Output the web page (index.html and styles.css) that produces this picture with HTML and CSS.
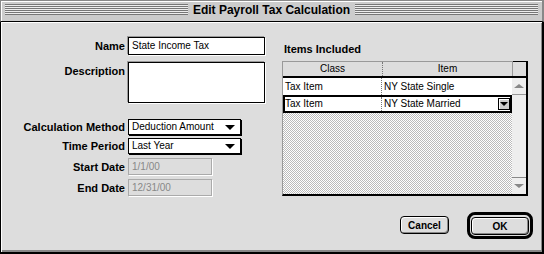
FILE: index.html
```html
<!DOCTYPE html>
<html lang="en">
  <head>
    <meta charset="UTF-8" />
    <title>Edit Payroll Tax Calculation</title>
    <link rel="stylesheet" href="styles.css">
  </head>
  <body>
    <div class="window">
      <div class="titlebar">
        <span class="stripes"></span>
        <span class="title">Edit Payroll Tax Calculation</span>
        <span class="stripes"></span>
      </div>

      <div class="content">
        <div class="panes">
          <div class="form">
            <div class="frow">
              <span class="lbl">Name</span>
              <div class="field">State Income Tax</div>
            </div>
            <div class="frow desc">
              <span class="lbl">Description</span>
              <div class="field area"></div>
            </div>
            <div class="frow calc">
              <span class="lbl">Calculation Method</span>
              <div class="popup">Deduction Amount</div>
            </div>
            <div class="frow period">
              <span class="lbl">Time Period</span>
              <div class="popup">Last Year</div>
            </div>
            <div class="frow start">
              <span class="lbl">Start Date</span>
              <div class="field date">1/1/00</div>
            </div>
            <div class="frow end">
              <span class="lbl">End Date</span>
              <div class="field date">12/31/00</div>
            </div>
          </div>

          <div class="items">
            <div class="items-title">Items Included</div>
            <div class="table">
              <div class="thead">
                <div class="th col-class">Class</div>
                <div class="th col-item">Item</div>
                <div class="corner"></div>
              </div>
              <div class="tbody">
                <div class="rows">
                  <div class="row">
                    <div class="td col-class">Tax Item</div>
                    <div class="td col-item">NY State Single</div>
                  </div>
                  <div class="row sel">
                    <div class="td col-class">Tax Item</div>
                    <div class="td col-item">NY State Married</div>
                    <span class="cell-btn"></span>
                  </div>
                  <div class="empty"></div>
                </div>
                <div class="scrollbar">
                  <div class="sb-btn up"><span class="tri-up"></span></div>
                  <div class="track"></div>
                  <div class="sb-btn down"><span class="tri-down"></span></div>
                </div>
              </div>
            </div>
          </div>
        </div>

        <div class="buttons">
          <button class="btn">Cancel</button>
          <div class="default-ring">
            <button class="btn ok">OK</button>
          </div>
        </div>
      </div>
    </div>
  </body>
</html>
```

FILE: styles.css
```css
body {
    margin: 0;
    background: #ddd;
    font-family: "Liberation Sans", Arial, sans-serif;
    color: #000;
}

.window {
    width: 544px;
    height: 254px;
    display: flex;
    flex-direction: column;
    background: #ddd;
}

/* title bar */
.titlebar {
    height: 22px;
    box-sizing: border-box;
    display: flex;
    align-items: flex-start;
    padding: 3px 4px 0 4px;
    background: #ccc;
    border-top: 1px solid #888;
    border-left: 1px solid #888;
    border-right: 2px solid #888;
    border-bottom: 1px solid #000;
    box-shadow: inset 1px 1px 0 #fff;
}

.stripes {
    flex: 1;
    height: 11px;
    background: repeating-linear-gradient(#777 0 1px, #eee 1px 2px);
}

.title {
    font-weight: bold;
    font-size: 12px;
    line-height: 12px;
    padding: 0 5px;
}

/* dialog body */
.content {
    flex: 1;
    display: flex;
    flex-direction: column;
    border-left: 1px solid #000;
    border-right: 2px solid #000;
    border-bottom: 2px solid #000;
    box-shadow: inset 1px 1px 0 #fff, inset -1px -2px 0 #888;
}

.panes {
    display: flex;
}

.form {
    width: 269px;
    padding-top: 15px;
}

.frow {
    display: flex;
    align-items: flex-start;
}

.lbl {
    width: 127px;
    box-sizing: border-box;
    padding: 3px 3px 0 0;
    text-align: right;
    font-weight: bold;
    font-size: 11px;
    line-height: 12px;
}

.field {
    width: 137px;
    height: 18px;
    box-sizing: border-box;
    border: 1px solid #000;
    background: #fff;
    font-size: 10px;
    line-height: 16px;
    padding: 0 3px;
    box-shadow: -1px -1px 0 #999, 1px 1px 0 #fff;
}

.frow.desc {
    margin-top: 7px;
}

.field.area {
    height: 41px;
}

.popup {
    position: relative;
    width: 113px;
    height: 16px;
    box-sizing: border-box;
    border: 1px solid #000;
    box-shadow: 1px 1px 0 #000;
    background: #fff;
    font-size: 10px;
    line-height: 14px;
    padding-left: 3px;
}

.popup::after {
    content: "";
    position: absolute;
    right: 5px;
    top: 5px;
    border-left: 5px solid transparent;
    border-right: 5px solid transparent;
    border-top: 5px solid #000;
}

.frow.calc {
    margin-top: 16px;
}

.frow.period {
    margin-top: 3px;
}

.frow.calc .lbl,
.frow.period .lbl {
    padding-top: 2px;
}

.field.date {
    width: 84px;
    height: 17px;
    line-height: 15px;
    background: #ddd;
    border-color: #aaa;
    color: #888;
    box-shadow: 1px 1px 0 #fff;
}

.frow.start {
    margin-top: 4px;
}

.frow.end {
    margin-top: 4px;
}

/* items table */
.items {
    margin-left: 12px;
}

.items-title {
    padding: 21px 0 0 2px;
    font-weight: bold;
    font-size: 11px;
    line-height: 12px;
    height: 18px;
}

.table {
    width: 246px;
    box-sizing: border-box;
    border-left: 1px solid #999;
    border-right: 2px solid #000;
    border-bottom: 2px solid #000;
}

.thead {
    display: flex;
    height: 17px;
    box-sizing: border-box;
    border-top: 1px solid #999;
    border-bottom: 2px solid #000;
    background: #ddd;
}

.th {
    font-size: 10px;
    line-height: 14px;
    text-align: center;
}

.col-class {
    width: 99px;
    border-right: 1px dotted #777;
}

.col-item {
    width: 129px;
}

.thead .col-item {
    border-right: 1px solid #999;
}

.corner {
    flex: 1;
    margin-top: -1px;
    border-top: 1px solid #000;
    background: #ddd;
}

.tbody {
    display: flex;
    height: 116px;
}

.rows {
    width: 229px;
    display: flex;
    flex-direction: column;
}

.row {
    position: relative;
    display: flex;
    height: 17px;
    box-sizing: border-box;
    background: #fff;
}

.td {
    font-size: 10px;
    line-height: 17px;
    padding-left: 2px;
    box-sizing: border-box;
}

.row .col-item {
    width: auto;
    flex: 1;
}

.row.sel {
    height: 18px;
    border: 2px solid #000;
}

.row.sel .td {
    line-height: 14px;
}

.row.sel .col-class {
    width: 97px;
    padding-left: 0;
}

.cell-btn {
    position: absolute;
    right: 0;
    top: 1px;
    width: 12px;
    height: 12px;
    box-sizing: border-box;
    border: 1px solid #000;
    background: #ccc;
    box-shadow: inset 1px 1px 0 #fff;
}

.cell-btn::after {
    content: "";
    position: absolute;
    left: 1px;
    top: 3px;
    border-left: 4px solid transparent;
    border-right: 4px solid transparent;
    border-top: 4px solid #000;
}

.empty {
    flex: 1;
    background: conic-gradient(from 90deg at 1px 1px, #bbb 25%, #fff 0 50%, #bbb 0 75%, #fff 0) 0 0 / 2px 2px;
}

.scrollbar {
    flex: 1;
    display: flex;
    flex-direction: column;
    background: #eee;
}

.sb-btn {
    height: 16px;
    display: flex;
    align-items: center;
    justify-content: center;
}

.sb-btn.up {
    border-bottom: 1px solid #999;
}

.sb-btn.down {
    border-top: 1px solid #888;
}

.track {
    flex: 1;
}

.tri-up {
    border-left: 5px solid transparent;
    border-right: 5px solid transparent;
    border-bottom: 4px solid #888;
}

.tri-down {
    border-left: 5px solid transparent;
    border-right: 5px solid transparent;
    border-top: 4px solid #888;
}

/* buttons */
.buttons {
    margin-top: auto;
    display: flex;
    justify-content: flex-end;
    align-items: center;
    gap: 18px;
    padding: 0 9px 13px 0;
}

.btn {
    height: 18px;
    width: 49px;
    box-sizing: border-box;
    border: 1px solid #000;
    border-radius: 4px;
    background: #ddd;
    box-shadow: inset 1px 1px 0 #fff, inset -1px -1px 0 #888;
    font-family: "Liberation Sans", Arial, sans-serif;
    font-weight: bold;
    font-size: 10px;
    padding: 0;
    color: #000;
}

.default-ring {
    padding: 1px;
    border: 3px solid #000;
    border-radius: 8px;
}

.btn.ok {
    width: 58px;
}
```
